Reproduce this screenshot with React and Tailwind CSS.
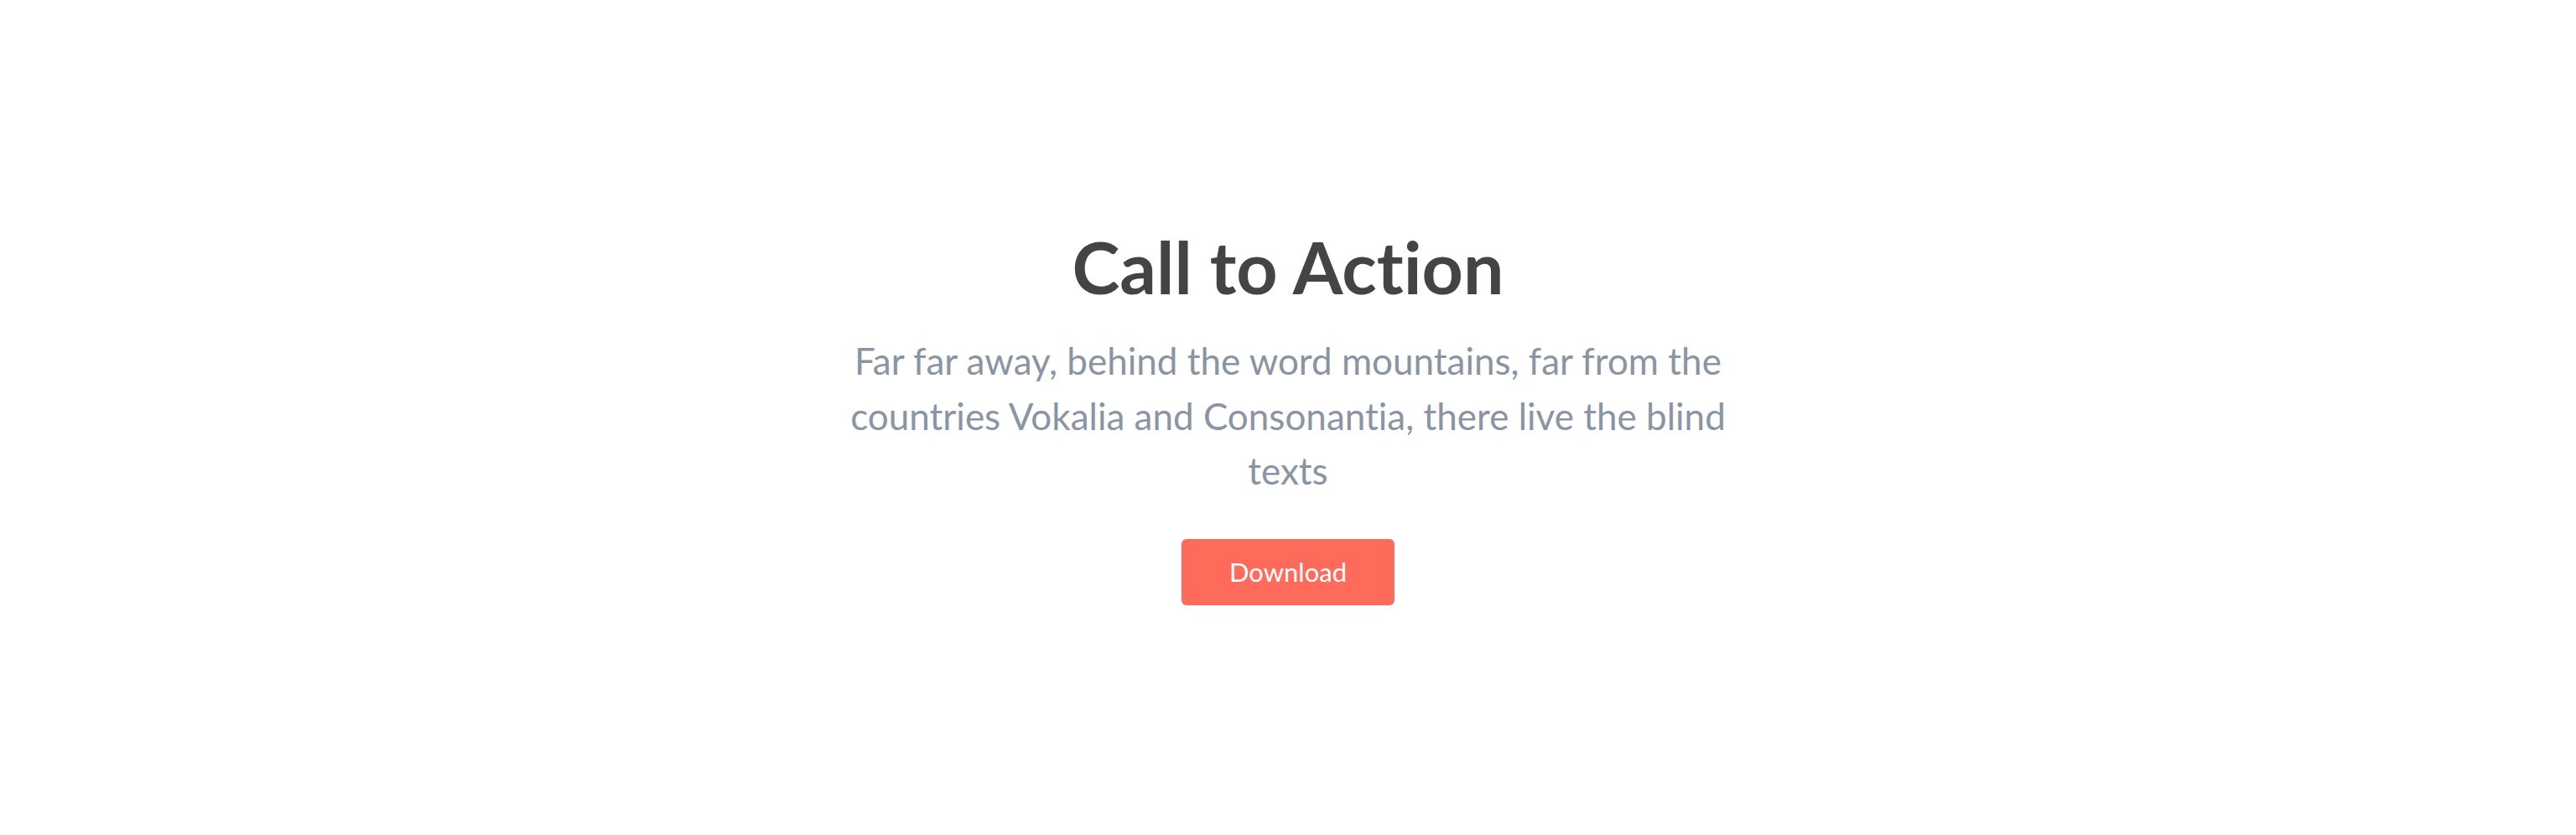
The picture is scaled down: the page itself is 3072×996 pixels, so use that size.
import React from 'react';

export default function App() {
  return (
    <div className="min-h-screen bg-white font-['Lato',sans-serif] [font-variant-ligatures:none]">
      <section className="pt-[266px] text-center flex flex-col items-center">
        <h1 className="text-[86px] leading-[1.2] font-bold text-[#444444]">Call to Action</h1>
        <p className="mt-[29px] max-w-[1100px] text-[44px] leading-[65.6px] text-[#8a94a3]">
          Far far away, behind the word mountains, far from the countries Vokalia and Consonantia, there live the blind texts
        </p>
        <button className="mt-[48px] w-[254px] h-[79px] rounded-md bg-[#ff6b5b] text-white text-[31px]">
          Download
        </button>
      </section>
    </div>
  );
}
